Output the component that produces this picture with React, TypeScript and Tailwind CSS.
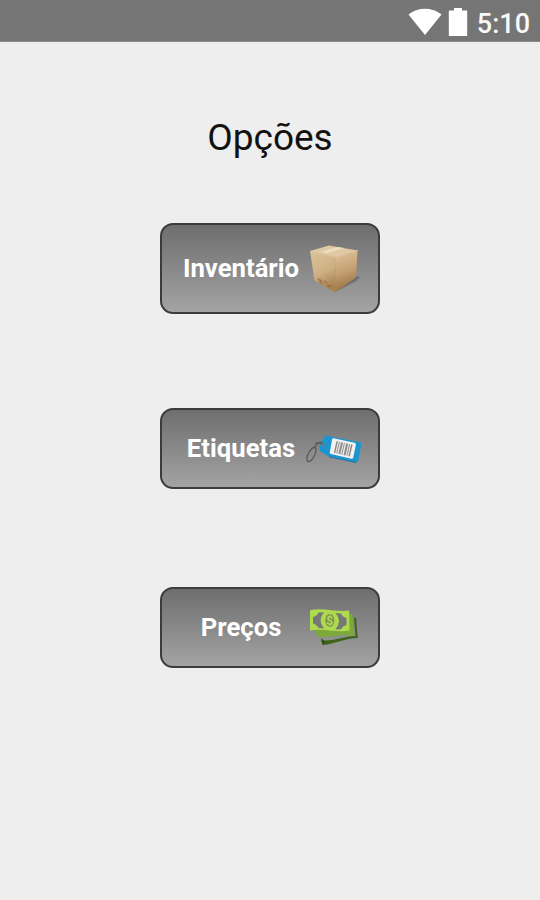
import type { ReactNode } from "react";

/* Options screen: status bar, title and three gradient buttons. */

function StatusBar() {
  return (
    <div className="flex h-[42px] items-center justify-end border-b border-[#8a8a8a] bg-[#757575] pr-[10px]">
      <svg width="34" height="28" viewBox="0 0 34 28" className="mt-[2px]" fill="#fff">
        <path d="M0.5 6.500C10 -1.200 24 -1.200 33.500 6.500L17 27Z" />
      </svg>
      <svg width="20" height="30" viewBox="0 0 20 30" className="ml-[6px] mt-[3px]" fill="#fff">
        <path d="M6 1h8v2.500h4.200c.6 0 1 .4 1 1v23.500c0 .6-.4 1-1 1H1.800c-.6 0-1-.4-1-1V4.500c0-.6.4-1 1-1H6z" />
      </svg>
      <span className="ml-[9px] mt-[8px] text-[27px] leading-none font-medium text-[#fafafa]">5:10</span>
    </div>
  );
}

function BoxIcon() {
  return (
    <svg width="56" height="56" viewBox="0 0 56 56">
      <defs>
        <linearGradient id="boxLeft" x1="0" y1="0" x2="0.3" y2="1">
          <stop offset="0" stopColor="#dcc39c" />
          <stop offset="0.6" stopColor="#ceb084" />
          <stop offset="1" stopColor="#a98353" />
        </linearGradient>
        <linearGradient id="boxRight" x1="0.2" y1="0" x2="0.4" y2="1">
          <stop offset="0" stopColor="#dfc59d" />
          <stop offset="0.5" stopColor="#c5a173" />
          <stop offset="1" stopColor="#94703f" />
        </linearGradient>
      </defs>
      <path d="M49 35l5 1-4 4-19 10z" fill="#555" opacity="0.6" />
      <path d="M4 10L23 4.500l28.500 5L30 16z" fill="#dfc8a3" />
      <path d="M4 10l26 6-1 35.500L8.500 39.500z" fill="url(#boxLeft)" />
      <path d="M30 16l21.500-6.500L50 36.500 29 51.500z" fill="url(#boxRight)" />
      <path d="M15 10.500l17-4.500 6 1-17 5.500z" fill="#ecdcc0" />
      <path d="M4 10l26 6 21.500-6.500" fill="none" stroke="#e3cca7" strokeWidth="0.8" />
      <path d="M12 38l4 2M18 40l3 2M21 44l4 2M13 40.500l4 2" stroke="#8a6238" strokeWidth="1.400" opacity="0.6" />
    </svg>
  );
}

function TagIcon() {
  return (
    <svg width="56" height="56" viewBox="0 0 56 56">
      <ellipse cx="5.500" cy="33.500" rx="3.200" ry="7.800" transform="rotate(28 5.500 33.500)" fill="none" stroke="#555" strokeWidth="1.200" />
      <path d="M19.500 14.500l33.500 6.500q2.500.7 2.200 3L52.500 38.500q-.6 3-3.500 2.700L22 35.300l-8-5.300-1-5.500z" fill="#1996cf" />
      <path d="M50 41.500L23 35.800" stroke="#0c6c9d" strokeWidth="0.8" />
      <path d="M27.500 17.300l21 4.500q1.700.4 1.400 2L47.200 36.700q-.4 1.400-1.900 1.100L25 33q-1.500-.4-1.200-1.800l2.300-13q.3-1.200 1.400-.9z" fill="#f3f1f2" />
      <g transform="translate(30.500 20) rotate(13)" fill="#8c8c8c">
        <path d="M0 0h1.500v12H0zM2.500 0h1v12h-1zM4.700 0h2v12h-2zM7.700 0h1v12h-1zM10 0h2v12h-2zM13 0h1v12h-1zM15 0h1.500v12H15z" />
      </g>
      <circle cx="16.800" cy="23.500" r="2" fill="#777" />
      <path d="M8.500 27c1-4 4-6 8-4.500M9.500 22.300l6-1.300" fill="none" stroke="#555" strokeWidth="1.200" />
    </svg>
  );
}

function MoneyIcon() {
  return (
    <svg width="56" height="56" viewBox="0 0 56 56">
      <path d="M48 18h2l1.800 20C39 38 29 44 17 45L15 38.500l3 2C29 41 39 36 49.500 36z" fill="#3d641a" />
      <path d="M15 38.500l4 3-2.500 3.500z" fill="#2b520d" />
      <path d="M43 14h3.300l2 22C36 33.500 23 38.500 11 36.500L9.700 30l33.500-.5z" fill="#7da93a" />
      <path d="M4 10.200C17 7 30 12.500 43.200 10.500l.3 20C30 33 17 28 4 30.700z" fill="#addb4c" />
      <path d="M12.500 12.500l5.500-.3q-7 8 0 16.300l-5.500-.5q-1.500-3.500-5.500-4.500v-6.500q4-1 5.500-4.500z" fill="#777" />
      <path d="M35 13.500l-5.500-.5q7 8 0 16.500l5.500-.2q1.500-3.300 5.500-4.300v-7q-4-1-5.500-4.500z" fill="#777" />
      <ellipse cx="23.800" cy="20.300" rx="4.500" ry="6.500" fill="#7c8f58" />
      <text x="23.800" y="24.500" textAnchor="middle" fontSize="12" fontWeight="700" fill="#addb4c">$</text>
    </svg>
  );
}

function OptionButton({ label, sizeClass, children }: { label: string; sizeClass: string; children: ReactNode }) {
  return (
    <button
      className={`flex w-[220px] items-center rounded-[13px] border-2 border-[#3c3c3c] bg-linear-to-b from-[#6d6d6d] to-[#a5a5a5] bg-origin-border pl-[14px] ${sizeClass}`}
    >
      <span className="w-[130px] text-center text-[25.7px] leading-none font-bold text-white">{label}</span>
      {children}
    </button>
  );
}

export default function App() {
  return (
    <div className="h-[900px] w-[540px] overflow-hidden bg-[#eeeeee] font-['Roboto',sans-serif]">
      <StatusBar />
      <main className="flex flex-col items-center">
        <h1 className="mt-[74px] text-[37px] leading-[44px] text-[#111]">Opções</h1>
        <OptionButton label="Inventário" sizeClass="mt-[63px] h-[91px]">
          <BoxIcon />
        </OptionButton>
        <OptionButton label="Etiquetas" sizeClass="mt-[94px] h-[81px]">
          <TagIcon />
        </OptionButton>
        <OptionButton label="Preços" sizeClass="mt-[98px] h-[81px]">
          <MoneyIcon />
        </OptionButton>
      </main>
    </div>
  );
}
